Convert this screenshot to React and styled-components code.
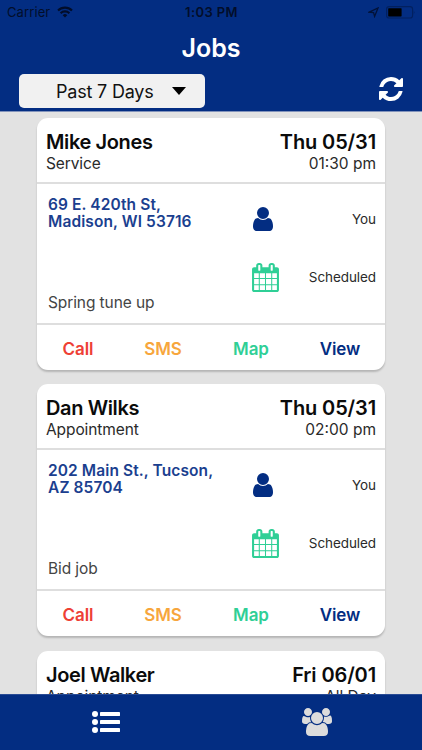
import styled, { createGlobalStyle } from 'styled-components';

const colors = {
  navy: '#032d82',
  page: '#e2e2e2',
  line: '#dedede',
  green: '#2fcf96',
  orange: '#f7a63c',
  red: '#ee4035',
};

const jobs = [
  {
    name: 'Mike Jones',
    type: 'Service',
    date: 'Thu 05/31',
    time: '01:30 pm',
    address: ['69 E. 420th St,', 'Madison, WI 53716'],
    note: 'Spring tune up',
  },
  {
    name: 'Dan Wilks',
    type: 'Appointment',
    date: 'Thu 05/31',
    time: '02:00 pm',
    address: ['202 Main St., Tucson,', 'AZ 85704'],
    note: 'Bid job',
  },
  {
    name: 'Joel Walker',
    type: 'Appointment',
    date: 'Fri 06/01',
    time: 'All Day',
  },
];

const UserIcon = () => (
  <svg width="24" height="28" viewBox="0 0 1536 1792" fill={colors.navy}>
    <path d="M1408 1399q0 109-62.5 187t-150.5 78h-854q-88 0-150.5-78t-62.5-187q0-85 8.5-160.5t31.5-152 58.5-131 94-89 134.5-34.5q131 128 313 128t313-128q76 0 134.5 34.5t94 89 58.5 131 31.5 152 8.5 160.5zm-256-887q0 159-112.5 271.5t-271.5 112.5-271.5-112.5-112.5-271.5 112.5-271.5 271.5-112.5 271.5 112.5 112.5 271.5z" />
  </svg>
);

const CalendarIcon = () => (
  <svg width="29" height="29" viewBox="0 0 1792 1792" fill={colors.green}>
    <path d="M192 1664h288v-288h-288v288zm352 0h320v-288h-320v288zm-352-352h288v-320h-288v320zm352 0h320v-320h-320v320zm-352-384h288v-288h-288v288zm736 736h320v-288h-320v288zm-384-736h320v-288h-320v288zm768 736h288v-288h-288v288zm-384-352h320v-320h-320v320zm-352-864v-288q0-13-9.5-22.5t-22.5-9.5h-64q-13 0-22.5 9.5t-9.5 22.5v288q0 13 9.5 22.5t22.5 9.5h64q13 0 22.5-9.5t9.5-22.5zm736 864h288v-320h-288v320zm-384-384h320v-288h-320v288zm384 0h288v-288h-288v288zm32-480v-288q0-13-9.5-22.5t-22.5-9.5h-64q-13 0-22.5 9.5t-9.5 22.5v288q0 13 9.5 22.5t22.5 9.5h64q13 0 22.5-9.5t9.5-22.5zm384-64v1280q0 52-38 90t-90 38h-1408q-52 0-90-38t-38-90v-1280q0-52 38-90t90-38h128v-96q0-66 47-113t113-47h64q66 0 113 47t47 113v96h384v-96q0-66 47-113t113-47h64q66 0 113 47t47 113v96h128q52 0 90 38t38 90z" />
  </svg>
);

const RefreshIcon = () => (
  <svg width="28" height="28" viewBox="0 0 1792 1792" fill="#fff">
    <path d="M1639 1056q0 5-1 7-64 268-268 434.5t-478 166.5q-146 0-282.5-55t-243.5-157l-129 129q-19 19-45 19t-45-19-19-45v-448q0-26 19-45t45-19h448q26 0 45 19t19 45-19 45l-137 137q71 66 161 102t187 36q134 0 250-65t186-179q11-17 53-117 8-23 30-23h192q13 0 22.5 9.5t9.5 22.5zm25-800v448q0 26-19 45t-45 19h-448q-26 0-45-19t-19-45 19-45l138-138q-148-137-349-137-134 0-250 65t-186 179q-11 17-53 117-8 23-30 23h-199q-13 0-22.5-9.5t-9.5-22.5v-7q65-268 270-434.5t480-166.5q146 0 284 55.5t245 156.5l130-129q19-19 45-19t45 19 19 45z" />
  </svg>
);

const ListIcon = () => (
  <svg width="28" height="24" viewBox="0 0 28 24" fill="#fff">
    <circle cx="3" cy="4" r="3" />
    <circle cx="3" cy="12" r="3" />
    <circle cx="3" cy="20" r="3" />
    <rect x="8" y="2" width="20" height="4" rx="0.4" />
    <rect x="8" y="10" width="20" height="4" rx="0.4" />
    <rect x="8" y="18" width="20" height="4" rx="0.4" />
  </svg>
);

const UsersIcon = () => (
  <svg width="30" height="28" viewBox="0 0 1920 1792" fill="#dcdcdc">
    <path d="M593 896q-162 5-265 128h-134q-82 0-138-40.5t-56-118.5q0-353 124-353 6 0 43.5 21t97.5 42.5 119 21.5q67 0 133-23-5 37-5 66 0 159 81 290zm1071 637q0 120-73 189.5t-194 69.5h-874q-121 0-194-69.5t-73-189.5q0-53 3.5-103.5t14-109 26.5-108.5 43-97.5 62-81 85.5-53.5 111.5-20q10 0 43 21.5t73 48 107 48 135 21.5 135-21.5 107-48 73-48 43-21.5q61 0 111.5 20t85.5 53.5 62 81 43 97.5 26.5 108.5 14 109 3.5 103.5zm-1024-1277q0 106-75 181t-181 75-181-75-75-181 75-181 181-75 181 75 75 181zm704 384q0 159-112.5 271.5t-271.5 112.5-271.5-112.5-112.5-271.5 112.5-271.5 271.5-112.5 271.5 112.5 112.5 271.5zm576 225q0 78-56 118.5t-138 40.5h-134q-103-123-265-128 81-131 81-290 0-29-5-66 66 23 133 23 59 0 119-21.5t97.5-42.5 43.5-21q124 0 124 353zm-128-609q0 106-75 181t-181 75-181-75-75-181 75-181 181-75 181 75 75 181z" />
  </svg>
);

const WifiIcon = () => (
  <svg width="16" height="12" viewBox="0 0 16 12" fill="none" stroke="#020d2a" strokeWidth="2.1">
    <path d="M1 4.5a10 10 0 0 1 14 0" />
    <path d="M3.6 7.2a6.3 6.3 0 0 1 8.8 0" />
    <path d="M8 11.6 5.7 9.2a3.3 3.3 0 0 1 4.6 0z" fill="#020d2a" stroke="none" />
  </svg>
);

const LocationIcon = () => (
  <svg width="11" height="11" viewBox="0 0 11 11" fill="none" stroke="#021238" strokeWidth="1.3">
    <path d="M1.2 5.2 10 1 6.6 9.4 5.6 5.6z" />
  </svg>
);

const BatteryIcon = () => (
  <svg width="30" height="13" viewBox="0 0 30 13">
    <rect x="0.6" y="0.6" width="26" height="11.4" rx="2.6" fill="none" stroke="#02205f" strokeWidth="1.1" />
    <rect x="2.2" y="2.2" width="13.4" height="8.2" rx="0.6" fill="#000" />
    <path d="M27.8 4.4q1.5 1.9 0 3.8z" fill="#02205f" />
  </svg>
);

const JobCard = ({ job }) => (
  <Card>
    <CardHeader>
      <HeaderLine>
        <Title $spacing="-0.38px">{job.name}</Title>
        <Title $spacing="-0.12px">{job.date}</Title>
      </HeaderLine>
      <HeaderLine>
        <Subtitle $spacing="-0.1px">{job.type}</Subtitle>
        <Subtitle>{job.time}</Subtitle>
      </HeaderLine>
    </CardHeader>
    {job.address && (
      <>
        <CardBody>
          <Details>
            <Address>
              {job.address.map((line) => (
                <div key={line}>{line}</div>
              ))}
            </Address>
            <Note>{job.note}</Note>
          </Details>
          <Statuses>
            <Status>
              <UserIcon />
              <span>You</span>
            </Status>
            <Status>
              <CalendarIcon />
              <span>Scheduled</span>
            </Status>
          </Statuses>
        </CardBody>
        <Actions>
          <Action $color={colors.red}>Call</Action>
          <Action $color={colors.orange}>SMS</Action>
          <Action $color={colors.green}>Map</Action>
          <Action $color={colors.navy}>View</Action>
        </Actions>
      </>
    )}
  </Card>
);

const App = () => (
  <Screen>
    <GlobalStyle />
    <TopBar>
      <StatusBar>
        <Carrier>
          Carrier
          <WifiIcon />
        </Carrier>
        <Clock>1:03 PM</Clock>
        <Indicators>
          <LocationIcon />
          <BatteryIcon />
        </Indicators>
      </StatusBar>
      <PageTitle>Jobs</PageTitle>
      <Toolbar>
        <RangeSelect>
          Past 7 Days
          <Caret />
        </RangeSelect>
        <RefreshButton aria-label="Refresh">
          <RefreshIcon />
        </RefreshButton>
      </Toolbar>
    </TopBar>
    <JobList>
      {jobs.map((job) => (
        <JobCard key={job.name} job={job} />
      ))}
    </JobList>
    <TabBar>
      <Tab aria-label="Jobs">
        <ListIcon />
      </Tab>
      <Tab aria-label="Customers">
        <UsersIcon />
      </Tab>
    </TabBar>
  </Screen>
);

const GlobalStyle = createGlobalStyle`
  * {
    box-sizing: border-box;
  }
  body {
    margin: 0;
    font-family: Inter, 'Liberation Sans', sans-serif;
  }
  button {
    border: 0;
    padding: 0;
    background: none;
    font-family: inherit;
  }
  svg {
    display: block;
  }
`;

const Screen = styled.div`
  display: flex;
  flex-direction: column;
  height: 750px;
  width: 422px;
  overflow: hidden;
  background: ${colors.page};
`;

const TopBar = styled.header`
  flex: none;
  height: 112px;
  background: ${colors.navy};
  border-bottom: 1px solid #8293bb;
`;

const StatusBar = styled.div`
  display: grid;
  grid-template-columns: 1fr auto 1fr;
  align-items: center;
  height: 24px;
  padding: 0 6px 0 7px;
  color: #020d2a;
  font-size: 13px;
  line-height: 24px;
`;

const Carrier = styled.div`
  display: flex;
  align-items: center;
  gap: 7px;
  letter-spacing: 0.1px;
`;

const Clock = styled.div`
  font-weight: 600;
  letter-spacing: 0.4px;
`;

const Indicators = styled.div`
  display: flex;
  align-items: center;
  justify-content: flex-end;
  gap: 7px;
`;

const PageTitle = styled.h1`
  margin: 0;
  height: 50px;
  color: #fff;
  font-size: 25px;
  font-weight: 600;
  line-height: 48px;
  text-align: center;
`;

const Toolbar = styled.div`
  display: flex;
  justify-content: space-between;
  align-items: flex-start;
  padding: 0 17px 0 19px;
`;

const RangeSelect = styled.button`
  display: flex;
  align-items: center;
  justify-content: space-between;
  width: 186px;
  height: 34px;
  padding: 0 19px 0 37px;
  border-radius: 5px;
  background: #f1f1f1;
  color: #111;
  font-size: 18px;
  letter-spacing: -0.2px;
`;

const Caret = styled.span`
  border: 7.5px solid transparent;
  border-top: 8px solid #000;
  border-bottom: 0;
`;

const RefreshButton = styled.button`
  height: 28px;
  margin-top: 1px;
`;

const JobList = styled.main`
  display: flex;
  flex-direction: column;
  flex: 1;
  gap: 14.3px;
  min-height: 0;
  padding: 6px 37px 0;
  overflow: hidden;
`;

const Card = styled.article`
  flex: none;
  height: 252px;
  border-radius: 11px;
  background: #fff;
  box-shadow: 0 2px 2px rgba(0, 0, 0, 0.2);
`;

const CardHeader = styled.div`
  height: 66px;
  padding: 12px 9px 0;
  border-bottom: 2px solid ${colors.line};
`;

const HeaderLine = styled.div`
  display: flex;
  justify-content: space-between;
`;

const Title = styled.div`
  color: #0b0b0b;
  font-size: 20px;
  font-weight: 600;
  line-height: 24px;
  letter-spacing: ${({ $spacing }) => $spacing};
`;

const Subtitle = styled.div`
  color: #2a2a2a;
  font-size: 15.5px;
  line-height: 19px;
  letter-spacing: ${({ $spacing }) => $spacing || 'normal'};
`;

const CardBody = styled.div`
  display: flex;
  justify-content: space-between;
  height: 139px;
  padding: 12px 9px 11px 11px;
`;

const Details = styled.div`
  display: flex;
  flex-direction: column;
  justify-content: space-between;
`;

const Address = styled.div`
  color: #1b3f8f;
  font-size: 15.5px;
  font-weight: 600;
  line-height: 17px;
  letter-spacing: 0.1px;
`;

const Note = styled.div`
  color: #444;
  font-size: 15.5px;
  line-height: 18px;
  letter-spacing: -0.1px;
`;

const Statuses = styled.div`
  width: 125px;
  padding-top: 8px;
`;

const Status = styled.div`
  display: flex;
  align-items: center;
  justify-content: space-between;
  height: 30px;
  color: #2a2a2a;
  font-size: 13.5px;
  letter-spacing: -0.08px;

  & + & {
    margin-top: 28px;
  }
`;

const Actions = styled.div`
  display: grid;
  grid-template-columns: 82px 88px 88px 1fr;
  height: 47px;
  border-top: 2px solid ${colors.line};
`;

const Action = styled.button`
  padding-top: 2px;
  color: ${({ $color }) => $color};
  font-size: 17px;
  font-weight: 600;
  letter-spacing: -0.1px;
`;

const TabBar = styled.nav`
  display: grid;
  grid-template-columns: 1fr 1fr;
  flex: none;
  height: 56px;
  border-top: 1px solid #294b94;
  background: ${colors.navy};
`;

const Tab = styled.button`
  display: flex;
  align-items: center;
  justify-content: center;
  padding-bottom: 1px;
`;

export default App;
